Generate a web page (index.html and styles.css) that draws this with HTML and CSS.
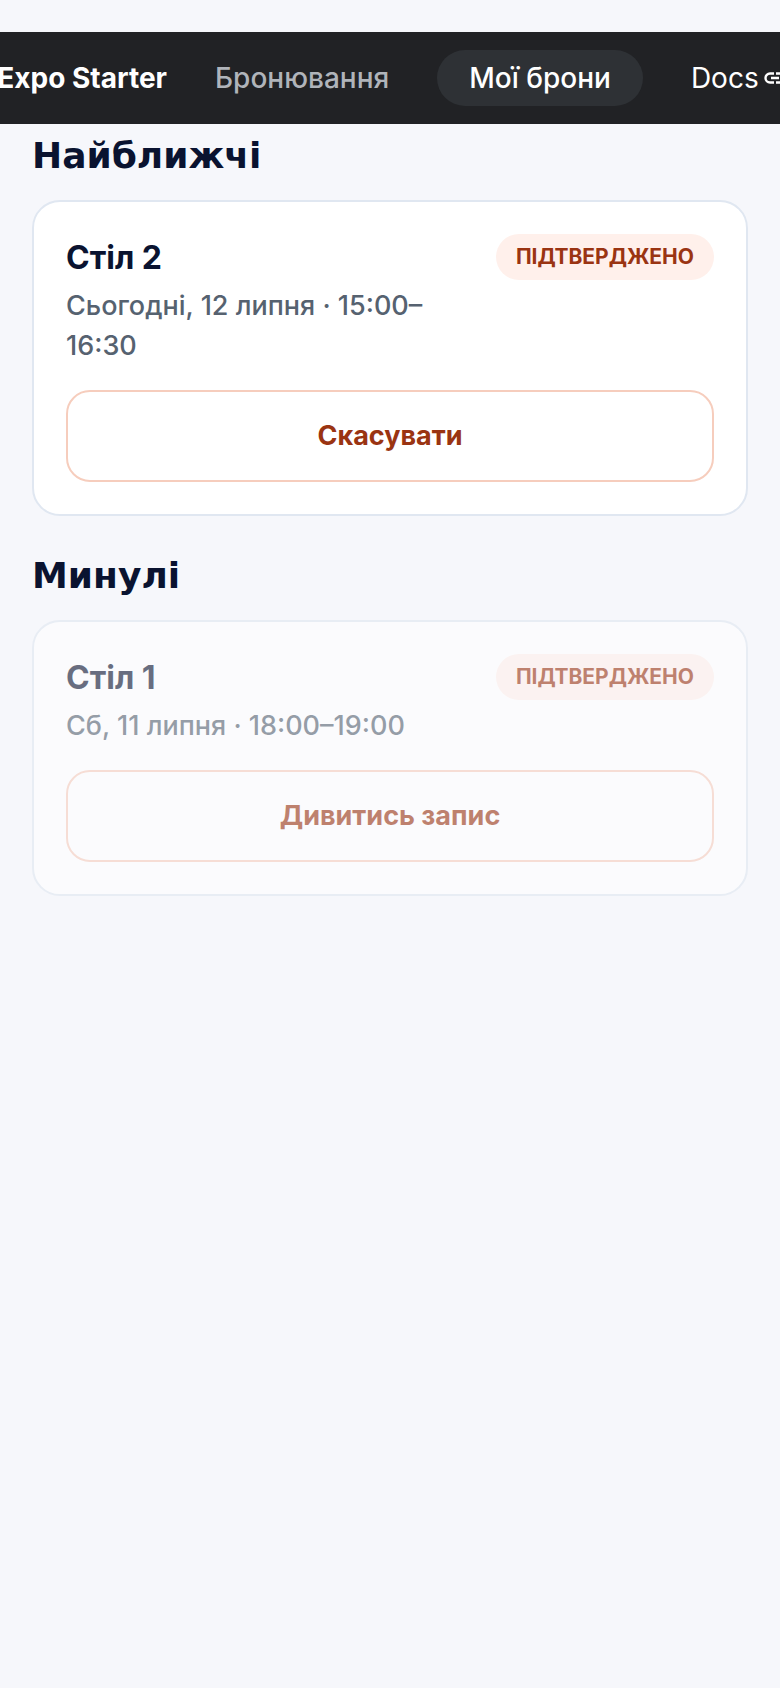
FILE: index.html
```html
<!DOCTYPE html>
<html lang="uk">
<head>
  <meta charset="UTF-8" />
  <meta name="viewport" content="width=device-width, initial-scale=1" />
  <title>Мої брони</title>
  <link rel="stylesheet" href="styles.css">
</head>
<body>
  <nav class="navbar">
    <span class="brand">Expo Starter</span>
    <a class="nav-link" href="#booking">Бронювання</a>
    <a class="nav-link active" href="#my">Мої брони</a>
    <a class="nav-link docs" href="#docs">Docs
      <svg class="link-icon" viewBox="0 0 24 24" fill="none" stroke="currentColor" stroke-width="2.4">
        <path d="M11 7.500H7a4.500 4.500 0 0 0 0 9h4M13 7.500h4a4.500 4.500 0 0 1 0 9h-4M8 12h8" />
      </svg>
    </a>
  </nav>

  <main class="page">
    <section class="section">
      <h2>Найближчі</h2>
      <article class="card">
        <div class="card-top">
          <div class="info">
            <h3>Стіл 2</h3>
            <p>Сьогодні, 12 липня · 15:00–<wbr>16:30</p>
          </div>
          <span class="badge">ПІДТВЕРДЖЕНО</span>
        </div>
        <button class="action" type="button">Скасувати</button>
      </article>
    </section>

    <section class="section">
      <h2>Минулі</h2>
      <article class="card past">
        <div class="card-top">
          <div class="info">
            <h3>Стіл 1</h3>
            <p>Сб, 11 липня · 18:00–19:00</p>
          </div>
          <span class="badge">ПІДТВЕРДЖЕНО</span>
        </div>
        <button class="action" type="button">Дивитись запис</button>
      </article>
    </section>
  </main>
</body>
</html>
```

FILE: styles.css
```css
:root {
  --bg: #f6f7fb;
  --ink: #0a1330;
  --muted: #566270;
  --accent: #9a3412;
}
* {
  box-sizing: border-box;
}
body {
  margin: 0;
  padding-top: 32px;
  background: var(--bg);
  color: var(--ink);
  font-family: Inter, "Noto Sans", sans-serif;
}
h2, h3, p {
  margin: 0;
}

.navbar {
  display: flex;
  justify-content: center;
  align-items: center;
  gap: 16px;
  padding: 18px 0 18px 4px;
  overflow: hidden;
  background: #212225;
  color: #fff;
  font-size: 28px;
  line-height: 32px;
  white-space: nowrap;
}
.brand {
  flex: none;
  font-weight: 700;
}
.nav-link {
  flex: none;
  padding: 12px 32px;
  border-radius: 28px;
  color: #b0b4ba;
  font-weight: 500;
  text-decoration: none;
}
.nav-link.active {
  background: #2e3135;
  color: #fff;
}
.nav-link.docs {
  display: flex;
  align-items: center;
  gap: 4px;
  padding-right: 0;
  color: #fff;
  font-weight: 400;
}
.link-icon {
  width: 24px;
  height: 24px;
}

.page {
  display: flex;
  flex-direction: column;
  gap: 40px;
  padding: 12px 32px 32px;
}
.section {
  display: flex;
  flex-direction: column;
  gap: 24px;
}
h2 {
  font-family: "DejaVu Sans", sans-serif;
  font-size: 36px;
  font-weight: 700;
  line-height: 40px;
}
.card {
  display: flex;
  flex-direction: column;
  gap: 24px;
  padding: 32px;
  background: #fff;
  border: 2px solid #e0e7f1;
  border-radius: 28px;
}
.card.past {
  opacity: 0.6;
}
.card-top {
  display: flex;
  align-items: flex-start;
  gap: 24px;
}
.info {
  flex: 1;
  display: flex;
  flex-direction: column;
  gap: 4px;
}
h3 {
  font-size: 32px;
  font-weight: 700;
  line-height: 48px;
}
.info p {
  color: var(--muted);
  font-size: 27px;
  font-weight: 500;
  line-height: 40px;
}
.badge {
  padding: 8px 20px;
  border-radius: 24px;
  background: #fff0eb;
  color: var(--accent);
  font-size: 21px;
  font-weight: 700;
  line-height: 30px;
}
.action {
  padding: 24px;
  background: transparent;
  border: 2px solid #f6cdbd;
  border-radius: 24px;
  color: var(--accent);
  font-family: inherit;
  font-size: 27px;
  font-weight: 700;
  line-height: 40px;
  cursor: pointer;
}
```
